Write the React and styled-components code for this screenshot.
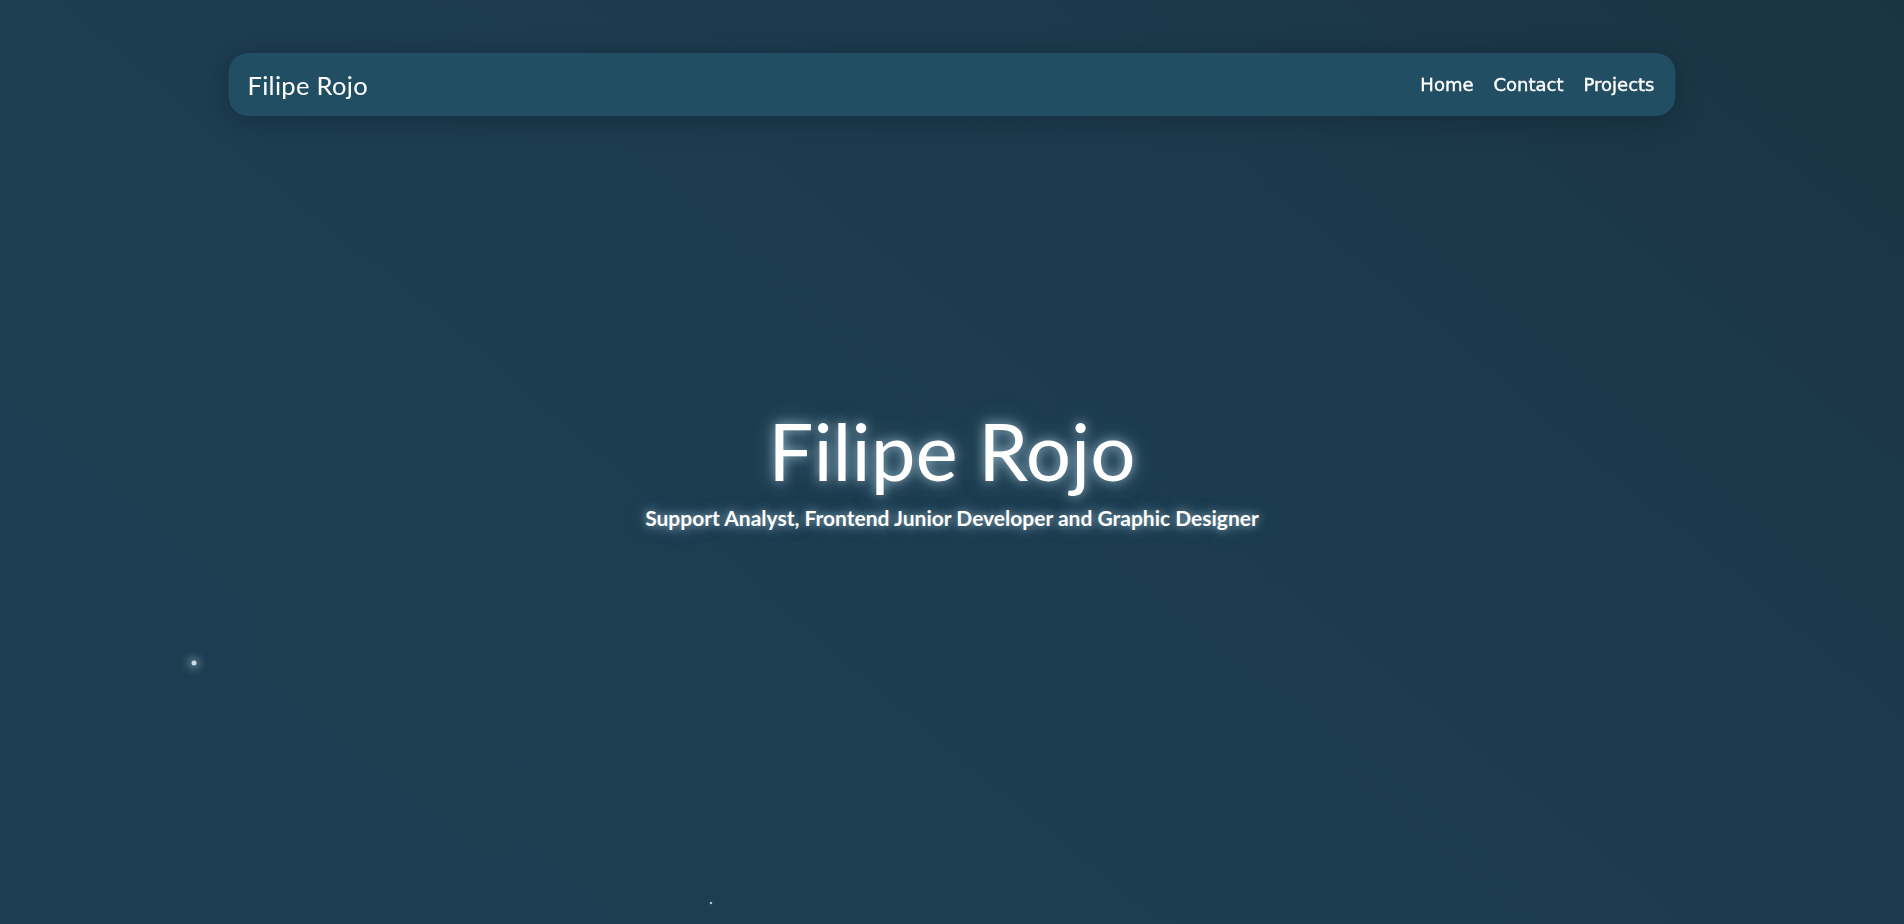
import React from "react";
import styled, { createGlobalStyle } from "styled-components";

const GlobalStyle = createGlobalStyle`
  html, body {
    margin: 0;
    padding: 0;
    height: 100%;
  }
  body {
    background: linear-gradient(220deg, #1a3442 0%, #1c3a4c 30%, #1d3d51 65%, #1d3e52 100%);
    color: #ffffff;
    font-family: "Lato", "Open Sans", sans-serif;
    overflow: hidden;
  }
`;

const particles = [
  { x: 194, y: 663, size: 5, glow: 8 },
  { x: 711, y: 903, size: 2, glow: 1 },
];

export default function App() {
  return (
    <>
      <GlobalStyle />
      <Page>
        <Header>
          <Logo>Filipe Rojo</Logo>
          <Nav>
            <NavLink href="#home">Home</NavLink>
            <NavLink href="#contact">Contact</NavLink>
            <NavLink href="#projects">Projects</NavLink>
          </Nav>
        </Header>

        <Hero>
          <Title>Filipe Rojo</Title>
          <Subtitle>Support Analyst, Frontend Junior Developer and Graphic Designer</Subtitle>
        </Hero>

        {particles.map((p, i) => (
          <Particle
            key={i}
            $glow={p.glow}
            style={{ left: p.x, top: p.y, width: p.size, height: p.size }}
          />
        ))}
      </Page>
    </>
  );
}

const Page = styled.div`
  position: relative;
  min-height: 100vh;
  overflow: hidden;
`;

const Header = styled.header`
  position: fixed;
  top: 53px;
  left: 50%;
  transform: translateX(-50%);
  width: 1447px;
  height: 63px;
  box-sizing: border-box;
  padding: 0 21px 0 19px;
  display: flex;
  align-items: center;
  justify-content: space-between;
  background-color: #224e63;
  border-radius: 20px;
  box-shadow: 0 4px 24px rgba(10, 25, 35, 0.35);
  z-index: 10;
`;

const Logo = styled.div`
  font-family: "Lato", sans-serif;
  font-size: 25.5px;
  font-weight: 400;
  color: #ffffff;
  letter-spacing: 0.3px;
`;

const Nav = styled.nav`
  display: flex;
  gap: 20px;
`;

const NavLink = styled.a`
  font-family: "DejaVu Sans", Verdana, sans-serif;
  font-size: 18px;
  font-weight: 400;
  color: #ffffff;
  text-decoration: none;
  -webkit-text-stroke: 0.4px #ffffff;
`;

const Hero = styled.main`
  min-height: 100vh;
  display: flex;
  flex-direction: column;
  align-items: center;
  justify-content: center;
  padding-top: 12px;
  box-sizing: border-box;
`;

const Title = styled.h1`
  margin: 0;
  font-family: "Lato", sans-serif;
  font-size: 80px;
  font-weight: 400;
  line-height: 1.1;
  color: #ffffff;
  text-shadow: 0 0 12px rgba(200, 230, 245, 0.7), 0 0 24px rgba(160, 210, 235, 0.35);
`;

const Subtitle = styled.p`
  margin: 11px 0 0;
  font-family: "Lato", sans-serif;
  font-size: 21px;
  font-weight: 700;
  color: #ffffff;
  text-shadow: 0 0 10px rgba(200, 230, 245, 0.7), 0 0 20px rgba(160, 210, 235, 0.35);
`;

const Particle = styled.span`
  position: absolute;
  border-radius: 50%;
  background: #c8dbe5;
  box-shadow: 0 0 ${(p) => p.$glow}px ${(p) => p.$glow / 3}px rgba(190, 215, 230, 0.5);
  transform: translate(-50%, -50%);
`;
